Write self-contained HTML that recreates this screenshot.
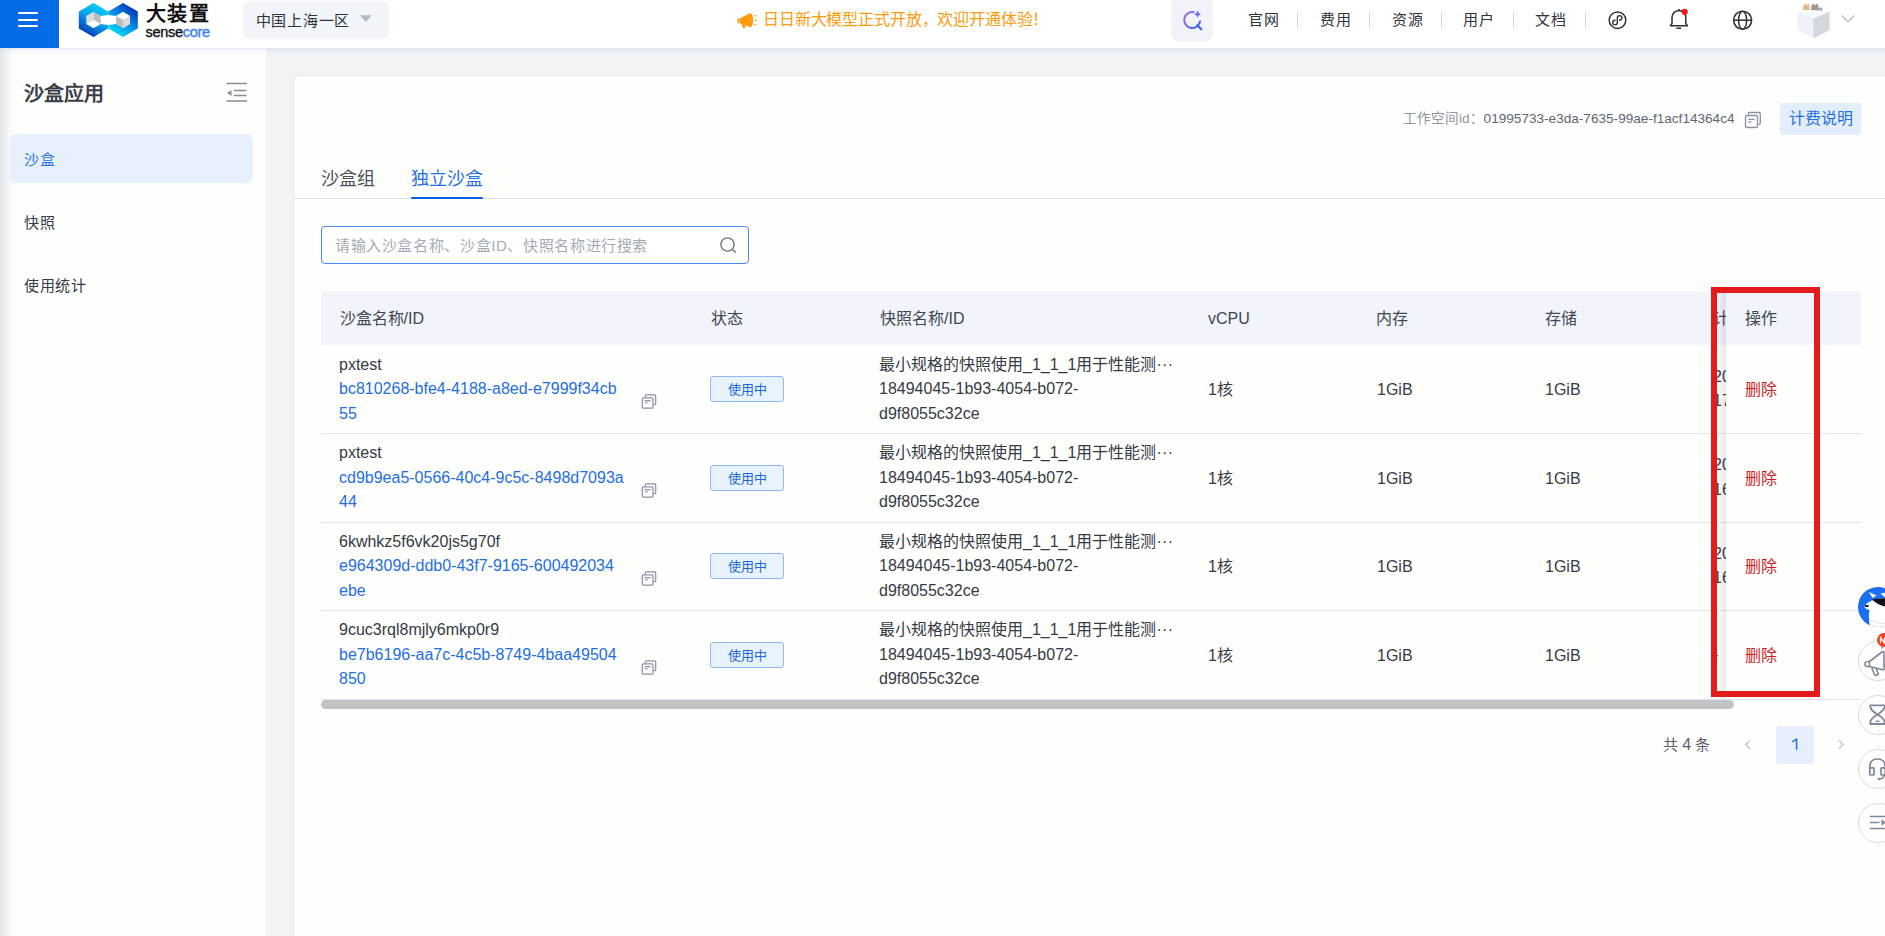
<!DOCTYPE html>
<html lang="zh-CN"><head><meta charset="utf-8">
<style>
*{box-sizing:border-box;margin:0;padding:0}
html,body{width:1885px;height:936px;overflow:hidden}
body{font-family:"Liberation Sans",sans-serif;background:#f1f4f6;position:relative;color:#333a44}
.abs{position:absolute}
.nw{white-space:nowrap}
/* header */
#hdr{position:absolute;left:0;top:0;width:1885px;height:48px;background:#fff;box-shadow:0 1px 5px rgba(170,195,235,.45);z-index:5}
#burger{position:absolute;left:0;top:0;width:59px;height:48px;background:#036ce5}
#burger i{position:absolute;left:18px;width:20px;height:2px;background:#fff;border-radius:1px}
.navt{position:absolute;top:10px;letter-spacing:0.6px;font-size:15px;line-height:20px;color:#2e333b;white-space:nowrap}
.sep{position:absolute;top:12px;width:1px;height:16px;background:#cdd5e3}
/* sidebar */
#side{position:absolute;left:0;top:48px;width:266px;height:888px;background:#fefefd}
#side .shade{position:absolute;left:0;top:0;width:18px;height:100%;background:linear-gradient(to right,#e1e5ea 0,#ebeff2 5px,#f5f6f8 9px,#fbfbfc 12px,rgba(254,254,253,0) 18px)}
/* card */
#card{position:absolute;left:293px;top:75px;width:1620px;height:900px;background:#fefefd;border:1px solid #e5e9f5;border-radius:6px}
.th{position:absolute;top:306.5px;font-size:16px;line-height:24px;color:#3f4651;white-space:nowrap}
.td{position:absolute;font-size:16px;line-height:24.5px;color:#353b45;white-space:nowrap}
.blue{color:#1f6fe0}
.tag{position:absolute;left:710px;width:74px;height:26px;border:1px solid #8dbaf3;background:#e8f2fd;border-radius:3px;font-size:13px;line-height:24px;padding-top:1px;text-align:center;color:#1a68dd}
.hline{position:absolute;left:321px;width:1540px;height:1px;background:#dfe5f0}
.circ{position:absolute;left:1858px;width:40px;height:40px;border-radius:50%;border:1px solid #d3dae8;background:#fefefd}
</style></head>
<body>
<svg width="0" height="0" style="position:absolute"><defs><g id="copy"><path d="M6.3 5V3.9Q6.3 2.8 7.4 2.8H15.6Q16.7 2.8 16.7 3.9V11.6Q16.7 12.7 15.6 12.7H14.6" fill="none" stroke="#8a93a6" stroke-width="1.25"/><rect x="3.3" y="5.8" width="10.7" height="10.4" rx="1.3" fill="#fefefd" stroke="#8a93a6" stroke-width="1.25"/><path d="M5.6 8.6H11.6 M5.6 10.8H8.8" stroke="#8a93a6" stroke-width="1.1"/></g></defs></svg>

<!-- HEADER -->
<div id="hdr">
  <div id="burger"><i style="top:12px"></i><i style="top:19px"></i><i style="top:25px"></i></div>
  <svg class="abs" style="left:70px;top:0" width="75" height="48" viewBox="70 0 75 48">
    <defs>
      <linearGradient id="g1" x1="0.75" y1="0" x2="0.2" y2="1"><stop offset="0" stop-color="#00d2fa"/><stop offset="0.45" stop-color="#0aa6f0"/><stop offset="1" stop-color="#0028a8"/></linearGradient>
      <linearGradient id="g2" x1="0.8" y1="0.1" x2="0.25" y2="0.9"><stop offset="0" stop-color="#0030b4"/><stop offset="0.5" stop-color="#0b8ee8"/><stop offset="1" stop-color="#00d4fb"/></linearGradient>
    </defs>
    <path fill="url(#g1)" fill-rule="evenodd" d="M93.5 3L108.2 11.5V28.5L93.5 37L78.8 28.5V11.5Z M93.5 12L86.6 16V24L93.5 28L100.4 24V16Z"/>
    <path fill="url(#g2)" fill-rule="evenodd" d="M123 3L137.8 11.5V28.5L123 37L108.4 28.5V11.5Z M123 12L116.1 16V24L123 28L129.9 24V16Z"/>
    <path fill="#fff" d="M100.4 16L108.3 15L116.1 16V24L108.3 25L100.4 24Z"/>
    <path fill="#dcdcdc" d="M86.6 16L93.5 12V20L86.6 24Z"/>
    <path fill="#bdbdbd" d="M93.5 12L100.4 16V24L93.5 20Z"/>
    <path fill="#fff" d="M86.6 24L93.5 20L100.4 24L93.5 28Z"/>
    <path fill="#fff" d="M116.1 16L123 12L129.9 16L123 20Z"/>
    <path fill="#bcbcbc" d="M116.1 16L123 20V28L116.1 24Z"/>
    <path fill="#dcdcdc" d="M123 20L129.9 16V24L123 28Z"/>
  </svg>
  <div class="abs nw" style="left:145.5px;top:1px;font-size:20px;line-height:26px;font-weight:bold;color:#111;letter-spacing:1.5px">大装置</div>
  <div class="abs nw" style="left:145.5px;top:24.5px;font-size:14.5px;line-height:14px;color:#111;letter-spacing:-0.3px;-webkit-text-stroke:0.35px #111">sense<span style="color:#3c7cf7;-webkit-text-stroke:0.35px #3c7cf7">core</span></div>

  <div class="abs" style="left:243px;top:1px;width:146px;height:37.5px;background:#f1f4f8;border-radius:6px"></div>
  <div class="abs nw" style="left:255.5px;top:9.5px;font-size:15px;letter-spacing:0.75px;line-height:22px;color:#2e333b">中国上海一区</div>
  <svg class="abs" style="left:359px;top:14px" width="14" height="9" viewBox="0 0 14 9"><path d="M1 1.3H12.6L6.8 7.9Z" fill="#b4bac8"/></svg>

  <svg class="abs" style="left:736px;top:11px" width="22" height="19" viewBox="0 0 22 19">
    <path fill="#fd9a0d" d="M4 7.2L13.5 2.5C15.8 1.6 17 4.5 17 9.3C17 14 15.8 17 13.5 16.1L9 14L9.6 16.6L7.4 17.4L5.2 12.8H4Z"/>
    <rect x="1.5" y="7.2" width="2" height="5" fill="#fd9a0d"/>
    <path stroke="#fd9a0d" stroke-width="1.3" d="M18.4 5.3L20 4.3M18.8 9.3H20.8M18.4 13.3L20 14.3"/>
  </svg>
  <div class="abs nw" style="left:763px;top:8.5px;font-size:16px;letter-spacing:-0.15px;line-height:22px;color:#fd9a0d">日日新大模型正式开放，欢迎开通体验！</div>

  <div class="abs" style="left:1171px;top:-6px;width:42px;height:47px;background:#f0f3f7;border-radius:6px"></div>
  <svg class="abs" style="left:1180px;top:8px" width="26" height="24" viewBox="0 0 26 24">
    <defs><linearGradient id="g3" x1="0" y1="0" x2="1" y2="1"><stop offset="0" stop-color="#a86cf5"/><stop offset="1" stop-color="#3d62e6"/></linearGradient></defs>
    <path d="M14.5 4.3A8 8 0 1 0 20.2 12.5" fill="none" stroke="url(#g3)" stroke-width="2"/>
    <path d="M17.3 17.3L21.3 21.3" stroke="#3d62e6" stroke-width="2" stroke-linecap="round"/>
    <path d="M17.6 2.5Q18.1 5.6 21 6.2Q18.1 6.8 17.6 9.8Q17.1 6.8 14.2 6.2Q17.1 5.6 17.6 2.5Z" fill="#6d6bf0"/>
  </svg>

  <div class="navt" style="left:1248px">官网</div><div class="sep" style="left:1297px"></div>
  <div class="navt" style="left:1320px">费用</div><div class="sep" style="left:1369px"></div>
  <div class="navt" style="left:1392px">资源</div><div class="sep" style="left:1441px"></div>
  <div class="navt" style="left:1463px">用户</div><div class="sep" style="left:1513px"></div>
  <div class="navt" style="left:1535px">文档</div><div class="sep" style="left:1585px"></div>

  <svg class="abs" style="left:1606px;top:9px" width="24" height="24" viewBox="0 0 24 24">
    <circle cx="11.5" cy="11.2" r="8.3" fill="none" stroke="#2c333b" stroke-width="1.5"/>
    <path d="M11.3 8.9V13.6A2.3 2.3 0 1 1 9 11.3H9.6 M11.3 8.9A2.3 2.3 0 1 1 13.6 11.2H13" fill="none" stroke="#2c333b" stroke-width="1.4"/>
  </svg>
  <svg class="abs" style="left:1668px;top:6px" width="24" height="26" viewBox="0 0 24 26">
    <path d="M4 17.5V11.5A7 7 0 0 1 10.8 4.5A7 7 0 0 1 17.8 11.5V17.5L19.4 19.8H2.4Z" fill="none" stroke="#2c333b" stroke-width="1.5" stroke-linejoin="round"/>
    <path d="M9 22.2H12.6" stroke="#2c333b" stroke-width="1.6" stroke-linecap="round"/>
    <path d="M10.8 4.5V3" stroke="#2c333b" stroke-width="1.5"/>
    <circle cx="16.7" cy="5.8" r="3.1" fill="#f4141b"/>
  </svg>
  <svg class="abs" style="left:1731px;top:8px" width="24" height="24" viewBox="0 0 24 24">
    <circle cx="11.6" cy="12.2" r="9" fill="none" stroke="#2c333b" stroke-width="1.6"/>
    <ellipse cx="11.6" cy="12.2" rx="4" ry="9" fill="none" stroke="#2c333b" stroke-width="1.5"/>
    <path d="M2.6 12.2H20.6" stroke="#2c333b" stroke-width="1.5"/>
  </svg>
  <svg class="abs" style="left:1795px;top:1px" width="38" height="40" viewBox="0 0 38 40">
    <path d="M2.5 10.5L18.5 3.5L34.5 10.5V29L18.5 37.5L2.5 29Z" fill="#eef1f7"/>
    <path d="M18.5 17.5L34.5 10.5V29L18.5 37.5Z" fill="#d2d7e0"/>
    <path d="M2.5 10.5L18.5 3.5L34.5 10.5L18.5 17.5Z" fill="#fbfcfe"/>
    <path d="M8 9C8 5 9 3 10.5 2.5L12 4.5L13.5 2.5C14.5 3.5 15 6 14.5 9Z" fill="#e0b98f"/>
    <path d="M16 9C16 5 17 3 18.5 2.5L20 4.5L21.5 2.5C23 3.5 24.5 6 23.5 9.5Z" fill="#9a9a9a"/>
    <path d="M23 9Q27 5 26.5 10" fill="none" stroke="#9a9a9a" stroke-width="1.6"/>
  </svg>
  <svg class="abs" style="left:1840px;top:13px" width="16" height="12" viewBox="0 0 16 12"><path d="M1.8 2.6L8 8.8L14.2 2.6" fill="none" stroke="#c3c9d3" stroke-width="1.6"/></svg>
</div>

<!-- SIDEBAR -->
<div id="side">
  <div class="shade"></div>
  <div class="abs nw" style="left:24px;top:31px;font-size:20px;line-height:30px;font-weight:bold;color:#3a3f47">沙盒应用</div>
  <svg class="abs" style="left:225px;top:34px" width="24" height="20" viewBox="0 0 24 20">
    <path d="M1.5 1.5H22 M9 8.5H21.5 M9 13.5H21.5 M1.5 19H22" stroke="#8c8c8c" stroke-width="1.6"/>
    <path d="M6.5 8L2 11L6.5 14Z" fill="#8c8c8c"/>
  </svg>
  <div class="abs" style="left:10px;top:86px;width:243px;height:49px;background:#e7f0fd;border-radius:6px"></div>
  <div class="abs nw" style="left:24px;top:100px;font-size:15px;letter-spacing:0.6px;line-height:24px;color:#1f6fe0">沙盒</div>
  <div class="abs nw" style="left:24px;top:162.5px;font-size:15px;letter-spacing:0.6px;line-height:24px;color:#353b45">快照</div>
  <div class="abs nw" style="left:24px;top:225.5px;font-size:15px;letter-spacing:0.6px;line-height:24px;color:#353b45">使用统计</div>
</div>

<!-- CARD -->
<div id="card"></div>

<!-- workspace id -->
<div class="abs nw" style="left:1403px;top:109px;font-size:13.6px;line-height:20px;color:#8e96a3">工作空间id：<span style="color:#5f6775">01995733-e3da-7635-99ae-f1acf14364c4</span></div>
<svg class="abs" style="left:1743px;top:110px" width="20" height="20" viewBox="0 0 20 20">
  <path d="M5.3 4.5V3.8Q5.3 2.5 6.6 2.5H16Q17.3 2.5 17.3 3.8V13Q17.3 14.3 16 14.3H15.5" fill="none" stroke="#8a93a6" stroke-width="1.3"/>
  <rect x="2.5" y="5.5" width="12" height="12" rx="1.4" fill="#fefefd" stroke="#8a93a6" stroke-width="1.3"/>
  <path d="M5.3 9.3H11.5 M5.3 11.8H8.5" stroke="#8a93a6" stroke-width="1.2"/>
</svg>
<div class="abs" style="left:1780px;top:103px;width:81px;height:32px;background:#e3eefc;border-radius:3px"></div>
<div class="abs nw" style="left:1789px;top:107px;font-size:16px;line-height:24px;color:#1f6fe0">计费说明</div>

<!-- tabs -->
<div class="abs nw" style="left:321px;top:165.5px;font-size:18px;line-height:26px;color:#4c525c">沙盒组</div>
<div class="abs nw" style="left:411px;top:165.5px;font-size:18px;line-height:26px;color:#1f6fe0">独立沙盒</div>
<div class="abs" style="left:294px;top:198px;width:1600px;height:1px;background:#d9e0ec"></div>
<div class="abs" style="left:411px;top:196.5px;width:72px;height:2.5px;background:#0b62e0;border-radius:1px"></div>

<!-- search -->
<div class="abs" style="left:321px;top:226px;width:428px;height:38px;border:1px solid #4a89f5;border-radius:4px;background:#fff"></div>
<div class="abs nw" style="left:335px;top:234px;font-size:15px;letter-spacing:0.62px;line-height:24px;color:#a3aab6">请输入沙盒名称、沙盒ID、快照名称进行搜索</div>
<svg class="abs" style="left:716px;top:234px" width="24" height="22" viewBox="0 0 24 22">
  <circle cx="11.5" cy="10.5" r="6.6" fill="none" stroke="#6e7685" stroke-width="1.4"/>
  <path d="M16.3 15.3L19.3 18.3" stroke="#6e7685" stroke-width="1.4" stroke-linecap="round"/>
</svg>

<!-- table header -->
<div class="abs" style="left:321px;top:291px;width:1540px;height:54px;background:#f1f4fa;border-radius:3px 3px 0 0"></div>
<div class="th" style="left:339.5px">沙盒名称/ID</div>
<div class="th" style="left:711px">状态</div>
<div class="th" style="left:880px">快照名称/ID</div>
<div class="th" style="left:1208px">vCPU</div>
<div class="th" style="left:1376px">内存</div>
<div class="th" style="left:1545px">存储</div>
<div class="th" style="left:1713px">计费</div>

<!-- table body -->
<div class="td" style="left:339px;top:352.5px">pxtest<br><span class="blue">bc810268-bfe4-4188-a8ed-e7999f34cb<br>55</span></div>
<svg class="abs cp" style="left:639px;top:392.0px" width="20" height="20" viewBox="0 0 20 20"><use href="#copy"/></svg>
<div class="tag" style="top:376.0px">使用中</div>
<div class="td" style="left:879px;top:352.5px">最小规格的快照使用_1_1_1用于性能测<span style="letter-spacing:0.3px">···</span><br>18494045-1b93-4054-b072-<br>d9f8055c32ce</div>
<div class="td" style="left:1208px;top:378.0px">1核</div>
<div class="td" style="left:1377px;top:378.0px">1GiB</div>
<div class="td" style="left:1545px;top:378.0px">1GiB</div>
<div class="td" style="left:1713px;top:364.75px">2025-09-17<br>17:20:31</div>
<div class="hline" style="top:433.0px"></div>
<div class="td" style="left:339px;top:441.0px">pxtest<br><span class="blue">cd9b9ea5-0566-40c4-9c5c-8498d7093a<br>44</span></div>
<svg class="abs cp" style="left:639px;top:480.5px" width="20" height="20" viewBox="0 0 20 20"><use href="#copy"/></svg>
<div class="tag" style="top:464.5px">使用中</div>
<div class="td" style="left:879px;top:441.0px">最小规格的快照使用_1_1_1用于性能测<span style="letter-spacing:0.3px">···</span><br>18494045-1b93-4054-b072-<br>d9f8055c32ce</div>
<div class="td" style="left:1208px;top:466.5px">1核</div>
<div class="td" style="left:1377px;top:466.5px">1GiB</div>
<div class="td" style="left:1545px;top:466.5px">1GiB</div>
<div class="td" style="left:1713px;top:453.25px">2025-09-17<br>16:20:31</div>
<div class="hline" style="top:521.5px"></div>
<div class="td" style="left:339px;top:529.5px">6kwhkz5f6vk20js5g70f<br><span class="blue">e964309d-ddb0-43f7-9165-600492034<br>ebe</span></div>
<svg class="abs cp" style="left:639px;top:569.0px" width="20" height="20" viewBox="0 0 20 20"><use href="#copy"/></svg>
<div class="tag" style="top:553.0px">使用中</div>
<div class="td" style="left:879px;top:529.5px">最小规格的快照使用_1_1_1用于性能测<span style="letter-spacing:0.3px">···</span><br>18494045-1b93-4054-b072-<br>d9f8055c32ce</div>
<div class="td" style="left:1208px;top:555.0px">1核</div>
<div class="td" style="left:1377px;top:555.0px">1GiB</div>
<div class="td" style="left:1545px;top:555.0px">1GiB</div>
<div class="td" style="left:1713px;top:541.75px">2025-09-17<br>16:20:31</div>
<div class="hline" style="top:610.0px"></div>
<div class="td" style="left:339px;top:618.0px">9cuc3rql8mjly6mkp0r9<br><span class="blue">be7b6196-aa7c-4c5b-8749-4baa49504<br>850</span></div>
<svg class="abs cp" style="left:639px;top:657.5px" width="20" height="20" viewBox="0 0 20 20"><use href="#copy"/></svg>
<div class="tag" style="top:641.5px">使用中</div>
<div class="td" style="left:879px;top:618.0px">最小规格的快照使用_1_1_1用于性能测<span style="letter-spacing:0.3px">···</span><br>18494045-1b93-4054-b072-<br>d9f8055c32ce</div>
<div class="td" style="left:1208px;top:643.5px">1核</div>
<div class="td" style="left:1377px;top:643.5px">1GiB</div>
<div class="td" style="left:1545px;top:643.5px">1GiB</div>
<div class="td" style="left:1713px;top:642.5px">-</div>
<div class="hline" style="top:699px"></div>
<div class="abs" style="left:321px;top:700px;width:1413px;height:9px;background:#c1c3c5;border-radius:5px"></div>
<div class="abs" style="left:1726px;top:291px;width:135px;height:54px;background:#f1f4fa"></div>
<div class="abs" style="left:1726px;top:345px;width:135px;height:354px;background:#fefefd"></div>
<div class="abs" style="left:1726px;top:433.0px;width:135px;height:1px;background:#dfe5f0"></div>
<div class="abs" style="left:1726px;top:521.5px;width:135px;height:1px;background:#dfe5f0"></div>
<div class="abs" style="left:1726px;top:610.0px;width:135px;height:1px;background:#dfe5f0"></div>
<div class="abs" style="left:1716px;top:291px;width:10px;height:408px;background:linear-gradient(to right,rgba(0,0,0,0),rgba(0,0,0,.09))"></div>
<div class="th" style="left:1745px">操作</div>
<div class="td" style="left:1745px;top:378.0px;color:#cc1f1f">删除</div>
<div class="td" style="left:1745px;top:466.5px;color:#cc1f1f">删除</div>
<div class="td" style="left:1745px;top:555.0px;color:#cc1f1f">删除</div>
<div class="td" style="left:1745px;top:643.5px;color:#cc1f1f">删除</div>
<!-- pagination -->
<div class="abs nw" style="left:1663px;top:734px;font-size:15px;line-height:22px;color:#5a6170">共 <span style="font-size:16px">4</span> 条</div>
<svg class="abs" style="left:1743px;top:739px" width="10" height="11" viewBox="0 0 10 11"><path d="M6.8 1.5L2.6 5.5L6.8 9.5" fill="none" stroke="#b9c0cb" stroke-width="1.2"/></svg>
<div class="abs" style="left:1776px;top:726px;width:38px;height:38px;background:#e6f0fc;border-radius:3px"></div><svg class="abs" style="left:1790px;top:737px" width="10" height="14" viewBox="0 0 10 14"><path d="M6.6 1.4V12.8 M6.6 1.6Q5 4 2.2 4.8" fill="none" stroke="#1f6fe0" stroke-width="1.5"/></svg>
<svg class="abs" style="left:1836px;top:739px" width="10" height="11" viewBox="0 0 10 11"><path d="M3 1.5L7.2 5.5L3 9.5" fill="none" stroke="#b9c0cb" stroke-width="1.2"/></svg>

<!-- red highlight box -->
<div class="abs" style="left:1711px;top:287px;width:109px;height:410px;border:6px solid #e41b1b"></div>

<!-- floating tools -->
<div class="abs" style="left:1857.5px;top:587px;width:40px;height:40px;border-radius:50%;background:#1c6ff2;overflow:hidden">
  <svg width="40" height="40" viewBox="0 0 40 40">
    <path d="M12 40Q10 30 11.5 23Q7.5 22.5 6.2 19.5Q8.5 15.5 13 14Q18 11 28 11.5H40V40Z" fill="#fff"/>
    <path d="M13 33Q20 38 30 36" fill="none" stroke="#e3e6ec" stroke-width="1.5"/>
    <path d="M11 5L18.5 8.5L14.5 11Z" fill="#fff"/>
    <path d="M22.5 6.5L28 5.5L27 10.5Z" fill="#fff"/>
    <path d="M14 12.5Q22 10.5 40 11.5V17Q33 20.5 27.5 19.5Q20 18.5 14 12.5Z" fill="#12161c"/>
    <ellipse cx="8.8" cy="19" rx="2.3" ry="1.1" fill="#12161c"/>
  </svg>
</div>
<div class="circ" style="top:641px"></div>
<svg class="abs" style="left:1858px;top:641px" width="27" height="40" viewBox="0 0 27 40">
  <path d="M11.5 20.5L24 11Q26 10 26 12V27.5Q26 29.5 24 28.5L11.5 25.5Z M11.5 20.5Q6.8 20 6.8 23Q6.8 26 11.5 25.5 M13.5 26L16.5 33.5Q17.5 35 19 34L20.5 33L18 27.5" fill="none" stroke="#7f889a" stroke-width="1.6" stroke-linejoin="round"/>
  <path d="M23.5 7.5L25 5.5" stroke="#7f889a" stroke-width="1.3"/>
</svg>
<div class="abs" style="left:1877px;top:633px;width:14px;height:14px;border-radius:50%;background:#f0421c"></div>
<svg class="abs" style="left:1879px;top:636px" width="7" height="8" viewBox="0 0 7 8"><path d="M1.5 7V1.5L5.5 7V1.5" fill="none" stroke="#fff" stroke-width="1.3"/></svg>
<div class="circ" style="top:695px"></div>
<svg class="abs" style="left:1858px;top:695px" width="27" height="40" viewBox="0 0 27 40">
  <path d="M11.5 10.3H28 M11.5 29H28 M12.3 10.5V12Q13 15.5 19.5 19.6Q13 23.5 12.3 27V28.8 M26.7 10.5V12Q26 15.5 19.5 19.6Q26 23.5 26.7 27V28.8" fill="none" stroke="#7f889a" stroke-width="1.8" stroke-linejoin="round"/>
  <path d="M17.5 26.3H21.5" stroke="#7f889a" stroke-width="1.4"/>
</svg>
<div class="circ" style="top:749px"></div>
<svg class="abs" style="left:1858px;top:749px" width="27" height="40" viewBox="0 0 27 40">
  <path d="M11.8 19.5V18Q11.8 10 19.5 10Q27.2 10 27.2 18V19.5" fill="none" stroke="#7f889a" stroke-width="1.7"/>
  <rect x="11.8" y="18.8" width="4.2" height="7.2" rx="0.8" fill="none" stroke="#7f889a" stroke-width="1.7"/>
  <rect x="23" y="18.8" width="4.2" height="7.2" rx="0.8" fill="none" stroke="#7f889a" stroke-width="1.7"/>
  <path d="M21 30Q25.8 30 26 26" fill="none" stroke="#7f889a" stroke-width="1.7"/>
  <circle cx="21" cy="30" r="1.3" fill="#7f889a"/>
</svg>
<div class="circ" style="top:803px"></div>
<svg class="abs" style="left:1858px;top:803px" width="27" height="40" viewBox="0 0 27 40">
  <path d="M11.8 13.5H27 M11.8 19.5H21.5 M11.8 25.5H27" stroke="#7f889a" stroke-width="1.6"/>
  <path d="M23.5 16L27.5 19.5L23.5 23Z" fill="#7f889a"/>
</svg>
</body></html>
